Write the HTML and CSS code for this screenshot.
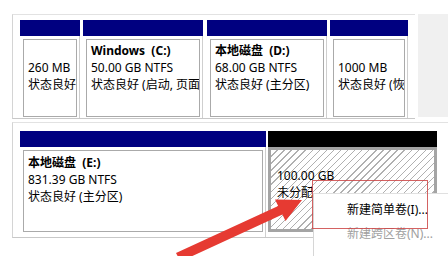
FILE: index.html
```html
<!DOCTYPE html>
<html>
<head>
    <title>磁盘管理</title>
    <link rel="stylesheet" href="styles.css">
</head>
<body>
    <div class="view">
        <div class="row">
            <div class="disk top">
                <div class="part w-sys">
                    <div class="head"></div>
                    <div class="body"><div class="box">
                        <div class="name"></div>
                        <div>260 MB</div>
                        <div>状态良好</div>
                    </div></div>
                </div>
                <div class="part w-c">
                    <div class="head"></div>
                    <div class="body"><div class="box">
                        <div class="name">Windows&nbsp;&nbsp;(C:)</div>
                        <div>50.00 GB NTFS</div>
                        <div>状态良好 (启动, 页面</div>
                    </div></div>
                </div>
                <div class="part w-d">
                    <div class="head"></div>
                    <div class="body"><div class="box">
                        <div class="name">本地磁盘&nbsp;&nbsp;(D:)</div>
                        <div>68.00 GB NTFS</div>
                        <div>状态良好 (主分区)</div>
                    </div></div>
                </div>
                <div class="part w-rec">
                    <div class="head"></div>
                    <div class="body"><div class="box">
                        <div class="name"></div>
                        <div>1000 MB</div>
                        <div>状态良好 (恢</div>
                    </div></div>
                </div>
            </div>
            <div class="gutter"></div>
        </div>

        <div class="disk bottom">
            <div class="part w-e">
                <div class="head"></div>
                <div class="body"><div class="box">
                    <div class="name">本地磁盘&nbsp;&nbsp;(E:)</div>
                    <div>831.39 GB NTFS</div>
                    <div>状态良好 (主分区)</div>
                </div></div>
            </div>
            <div class="part w-free">
                <div class="head black"></div>
                <div class="body free"><div class="box">
                    <div class="name"></div>
                    <div>100.00 GB</div>
                    <div>未分配</div>
                </div></div>
            </div>
        </div>
    </div>

    <div class="menu">
        <div class="item">新建简单卷(I)...</div>
        <div class="item off">新建跨区卷(N)...</div>
    </div>
    <div class="mark"></div>

    <svg class="arrow" width="448" height="256" viewBox="0 0 448 256">
        <polygon fill="#e63a32" points="180.5,261.5 282.4,214.5 285.5,221 302,200 275,199.5 278.2,205.9 176,253"/>
    </svg>
</body>
</html>
```

FILE: styles.css
```css
body {
    margin: 0;
    width: 448px;
    height: 256px;
    overflow: hidden;
    position: relative;
    background: #fff;
    color: #000;
    font-family: "Noto Sans", "Noto Sans CJK SC", sans-serif;
    font-size: 12px;
}
.view {
    padding: 14px 0 0 12px;
}
.row {
    display: flex;
}
.gutter {
    flex: 1;
    background: #f0f0f0;
    margin-left: 3px;
    margin-bottom: 2px;
}
.disk {
    display: flex;
    border-left: 1px solid #d4d4d4;
    border-top: 1px solid #e2e2e2;
    padding: 5px 0 0 7px;
}
.disk.top {
    width: 395px;
    border-bottom: 1px solid #c8c8c8;
}
.disk.bottom {
    margin-top: 3px;
    padding-top: 8px;
    border-bottom: 1px solid #c8c8c8;
}
.part {
    display: flex;
    flex-direction: column;
    margin-right: 3px;
}
.w-sys { width: 60px; }
.w-c { width: 120px; margin-right: 4px; }
.w-d { width: 120px; }
.w-rec { width: 78px; margin-right: 0; }
.w-e { width: 246px; margin-right: 2px; }
.w-free { width: 169px; margin-right: 0; }
.head {
    height: 16px;
    background: #000080;
}
.head.black {
    background: #000;
}
.body {
    height: 82px;
    box-sizing: border-box;
    padding: 3px 2px 1px 3px;
    border-right: 1px solid #cfcfcf;
}
.bottom .body {
    height: 90px;
    padding-bottom: 5px;
}
.box {
    height: 100%;
    box-sizing: border-box;
    border: 1px solid #aaa;
    padding: 2px 0 0 4px;
    line-height: 17px;
    white-space: nowrap;
    overflow: hidden;
}
.bottom .box {
    padding-top: 3px;
}
.name {
    height: 17px;
    font-weight: bold;
}
.body.free {
    padding: 0;
    border: none;
    height: 85px;
}
.free .box {
    border: 3px solid #a4a4a4;
    padding: 0 0 0 6px;
    background: repeating-linear-gradient(135deg, #fff 0 4px, #b0b0b0 4px 5px);
}
.menu {
    position: absolute;
    left: 313px;
    top: 193px;
    right: 0;
    bottom: 0;
    background: #fff;
    border-left: 1px solid #d6d6d6;
    border-top: 1px solid #e0e0e0;
    padding-top: 4px;
}
.item {
    line-height: 24px;
    padding-left: 33px;
    white-space: nowrap;
}
.item.off {
    color: #a0a0a0;
}
.mark {
    position: absolute;
    left: 312px;
    top: 180px;
    width: 114px;
    height: 47px;
    border: 1px solid rgba(205, 70, 70, 0.85);
}
.arrow {
    position: absolute;
    left: 0;
    top: 0;
}
```
